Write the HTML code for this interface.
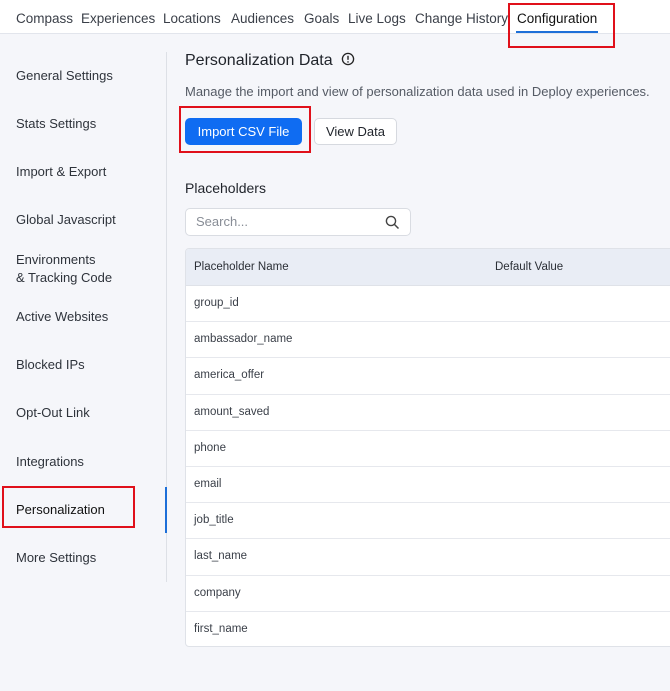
<!DOCTYPE html>
<html><head><style>
*{box-sizing:border-box;margin:0;padding:0}
body{width:670px;height:691px;background:#f5f6fa;font-family:"Liberation Sans",sans-serif;color:#2b2f36;position:relative;overflow:hidden}
.nav{position:absolute;left:0;top:0;width:670px;height:34px;background:#fff;border-bottom:1px solid #e2e5ec}
.nav span{position:absolute;top:11px;font-size:13.5px;color:#3a3f48}
.ul{position:absolute;left:516px;top:31px;width:82px;height:2px;background:#1d6fd8}
.red{position:absolute;border:2px solid #e0101a}
.side{position:absolute;left:16px;font-size:13px;color:#2e333b;line-height:18px}
.vline{position:absolute;left:166px;top:52px;width:1px;height:530px;background:#dde0e6}
.act{position:absolute;left:165px;top:487px;width:2px;height:46px;background:#1d6fd8}
.h1{position:absolute;left:185px;top:52px;font-size:16px;color:#1f232a}
.desc{position:absolute;left:185px;top:84px;font-size:13px;color:#555b65}
.btn1{position:absolute;left:185px;top:118px;width:117px;height:27px;background:#0f6cf2;border-radius:5px;color:#fff;font-size:13px;text-align:center;line-height:27px}
.btn2{position:absolute;left:314px;top:118px;width:83px;height:27px;background:#fff;border:1px solid #d6d9df;border-radius:5px;font-size:13px;text-align:center;line-height:25px;color:#1f232a}
.h2{position:absolute;left:185px;top:180px;font-size:14px;color:#1f232a}
.search{position:absolute;left:185px;top:208px;width:226px;height:28px;background:#fff;border:1px solid #d9dce2;border-radius:5px;font-size:13px;color:#888d96;padding-left:10px;line-height:26px}
.table{position:absolute;left:185px;top:248px;width:490px;height:399px;background:#fff;border:1px solid #dfe2e8;border-radius:4px 0 0 4px;overflow:hidden}
.th{height:37px;background:#e9edf5;border-bottom:1px solid #dfe2e8;font-size:11.5px;position:relative;line-height:36px;padding-left:8px;color:#2b2f36}
.tr{height:36.2px;border-bottom:1px solid #e6e8ed;font-size:11.5px;line-height:35px;padding-left:8px;color:#3a3f48}
</style></head><body>
<div class="nav">
<span style="left:16px">Compass</span><span style="left:81px">Experiences</span><span style="left:163px">Locations</span><span style="left:231px">Audiences</span><span style="left:304px">Goals</span><span style="left:348px">Live Logs</span><span style="left:415px">Change History</span><span style="left:517px;color:#111">Configuration</span>
</div>
<div class="ul"></div>
<div class="red" style="left:508px;top:3px;width:107px;height:45px"></div>
<div class="vline"></div><div class="act"></div>
<div class="side" style="top:67px">General Settings</div>
<div class="side" style="top:115px">Stats Settings</div>
<div class="side" style="top:163px">Import &amp; Export</div>
<div class="side" style="top:211px">Global Javascript</div>
<div class="side" style="top:251px">Environments<br>&amp; Tracking Code</div>
<div class="side" style="top:308px">Active Websites</div>
<div class="side" style="top:356px">Blocked IPs</div>
<div class="side" style="top:404px">Opt-Out Link</div>
<div class="side" style="top:453px">Integrations</div>
<div class="side" style="top:501px;color:#111">Personalization</div>
<div class="side" style="top:549px">More Settings</div>
<div class="red" style="left:2px;top:486px;width:133px;height:42px"></div>
<div class="h1">Personalization Data <svg width="14" height="14" viewBox="0 0 14 14" style="vertical-align:-1px;margin-left:4px"><circle cx="7" cy="7" r="5.6" fill="none" stroke="#222" stroke-width="1.3"/><path d="M7 3.8v4" stroke="#222" stroke-width="1.4"/><circle cx="7" cy="9.9" r=".8" fill="#222"/></svg></div>
<div class="desc">Manage the import and view of personalization data used in Deploy experiences.</div>
<div class="btn1">Import CSV File</div>
<div class="btn2">View Data</div>
<div class="red" style="left:179px;top:106px;width:132px;height:47px"></div>
<div class="h2">Placeholders</div>
<div class="search">Search...<svg width="15" height="15" viewBox="0 0 15 15" style="position:absolute;right:10px;top:6px"><circle cx="6" cy="6" r="4.6" fill="none" stroke="#444" stroke-width="1.4"/><path d="M9.5 9.5l4 4" stroke="#444" stroke-width="1.5"/></svg></div>
<div class="table">
<div class="th">Placeholder Name<span style="position:absolute;left:309px">Default Value</span></div>
<div class="tr">group_id</div><div class="tr">ambassador_name</div><div class="tr">america_offer</div><div class="tr">amount_saved</div><div class="tr">phone</div><div class="tr">email</div><div class="tr">job_title</div><div class="tr">last_name</div><div class="tr">company</div><div class="tr" style="border-bottom:none">first_name</div>
</div>
</body></html>
